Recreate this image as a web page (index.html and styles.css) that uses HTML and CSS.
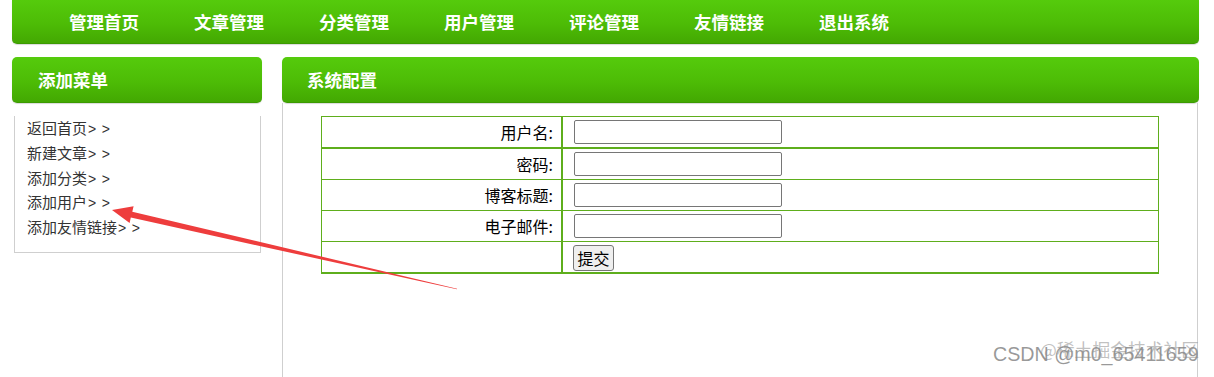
FILE: index.html
```html
<!DOCTYPE html>
<html lang="zh-CN">
<head>
<meta charset="utf-8">
<title>系统配置</title>
<link rel="stylesheet" href="styles.css">
</head>
<body>
<div class="page">
  <nav class="topnav">
    <a href="#">管理首页</a>
    <a href="#">文章管理</a>
    <a href="#">分类管理</a>
    <a href="#">用户管理</a>
    <a href="#">评论管理</a>
    <a href="#">友情链接</a>
    <a href="#">退出系统</a>
  </nav>
  <div class="main">
    <aside class="side">
      <h2 class="bar">添加菜单</h2>
      <ul class="menu">
        <li><a href="#">返回首页<span class="gt">&gt; &gt;</span></a></li>
        <li><a href="#">新建文章<span class="gt">&gt; &gt;</span></a></li>
        <li><a href="#">添加分类<span class="gt">&gt; &gt;</span></a></li>
        <li><a href="#">添加用户<span class="gt">&gt; &gt;</span></a></li>
        <li><a href="#">添加友情链接<span class="gt">&gt; &gt;</span></a></li>
      </ul>
    </aside>
    <section class="content">
      <h2 class="bar">系统配置</h2>
      <div class="panel">
        <table class="form">
          <tr class="r1"><td class="lbl">用户名:</td><td class="fld"><input type="text"></td></tr>
          <tr><td class="lbl">密码:</td><td class="fld"><input type="password"></td></tr>
          <tr><td class="lbl">博客标题:</td><td class="fld"><input type="text"></td></tr>
          <tr><td class="lbl">电子邮件:</td><td class="fld"><input type="text"></td></tr>
          <tr class="last"><td class="lbl"></td><td class="fld"><button type="button">提交</button></td></tr>
        </table>
      </div>
    </section>
  </div>
</div>
<svg class="arrow" width="1214" height="377" viewBox="0 0 1214 377">
  <polygon points="112,210 133.6,206.2 132.3,211.7 457.1,288.7 456.9,289.3 130.8,217.6 129.6,223" fill="#ee3d3d"/>
</svg>
<div class="wm wm1">CSDN @m0_65411659</div>
<div class="wm wm2">@稀土掘金技术社区</div>
</body>
</html>
```
FILE: styles.css
```css
html, body {
  margin: 0;
  padding: 0;
  background: #fff;
  height: 377px;
  overflow: hidden;
}
body {
  font-family: "Noto Sans CJK SC", "Liberation Sans", sans-serif;
  position: relative;
}
.page {
  margin-left: 12px;
  width: 1187px;
}
.topnav {
  display: flex;
  gap: 55px;
  padding-left: 57px;
  height: 43px;
  line-height: 43px;
  border-radius: 0 0 5px 5px;
  background: linear-gradient(#55cb0c, #4dbc06 55%, #43a802);
  border-bottom: 1px solid #3c9a02;
  box-shadow: 0 1px 1px rgba(0,0,0,0.15);
}
.topnav a {
  color: #fff;
  font-weight: bold;
  font-size: 17.5px;
  text-decoration: none;
}
.main {
  display: flex;
  gap: 20px;
  margin-top: 13px;
}
.side {
  width: 250px;
  flex: none;
}
.content {
  flex: 1;
}
.bar {
  margin: 0;
  height: 45px;
  line-height: 46px;
  border-radius: 5px;
  background: linear-gradient(#55cb0c, #4dbc06 55%, #43a802);
  border-bottom: 1px solid #3c9a02;
  box-shadow: 0 1px 1px rgba(0,0,0,0.15);
  color: #fff;
  font-size: 17.5px;
  font-weight: bold;
  padding-left: 26px;
}
.content .bar {
  padding-left: 25px;
}
.menu {
  list-style: none;
  box-sizing: border-box;
  margin: 13px 0 0 2px;
  width: 247px;
  padding: 0 0 12px 12px;
  border: 1px solid #cfcfcf;
  border-top: none;
}
.menu li {
  display: block;
  height: 24.75px;
  line-height: 24.75px;
  font-size: 15px;
  overflow: visible;
}
.menu a {
  color: #333;
  text-decoration: none;
}
.menu .gt {
  letter-spacing: 0.8px;
  margin-left: 1px;
  font-family: "Liberation Sans", sans-serif;
  font-size: 14px;
  line-height: 1;
}
.panel {
  border-left: 1px solid #cfcfcf;
  border-right: 1px solid #cfcfcf;
  margin-right: 1px;
  height: 261px;
  padding: 13px 38px 0;
}
.form {
  width: 100%;
  border-collapse: collapse;
  font-size: 16px;
  color: #000;
}
.form td {
  border: 1px solid #5eae1c;
  height: 30px;
  padding: 0;
}
.form .r1 td {
  border-bottom: 2px solid #5eae1c;
}
.form .last td {
  border-bottom: 2px solid #5eae1c;
}
.form .lbl {
  width: 231px;
  text-align: right;
  padding-right: 8px;
  border-right: 2px solid #5eae1c;
}
.form .fld {
  padding-left: 11px;
}
.form input {
  display: block;
  width: 208px;
  height: 24px;
  box-sizing: border-box;
  border: 1px solid #767676;
  border-radius: 2px;
  margin: 0;
  padding: 1px 2px;
}
.form button {
  display: block;
  font-family: "Noto Sans CJK SC", sans-serif;
  font-size: 16px;
  line-height: 22px;
  height: 26px;
  padding: 0 3.5px;
  margin: 1px 0 0 -1px;
  background: #efefef;
  border: 1px solid #767676;
  border-radius: 3px;
  color: #000;
}
.arrow {
  position: absolute;
  left: 0;
  top: 0;
  pointer-events: none;
}
.wm {
  position: absolute;
  white-space: nowrap;
  pointer-events: none;
}
.wm1 {
  left: 993px;
  top: 343px;
  font-family: "Liberation Sans", sans-serif;
  font-size: 19.7px;
  color: rgba(120,120,120,0.75);
}
.wm2 {
  left: 1040px;
  top: 336px;
  font-size: 17.8px;
  color: rgba(140,140,140,0.55);
}
```
